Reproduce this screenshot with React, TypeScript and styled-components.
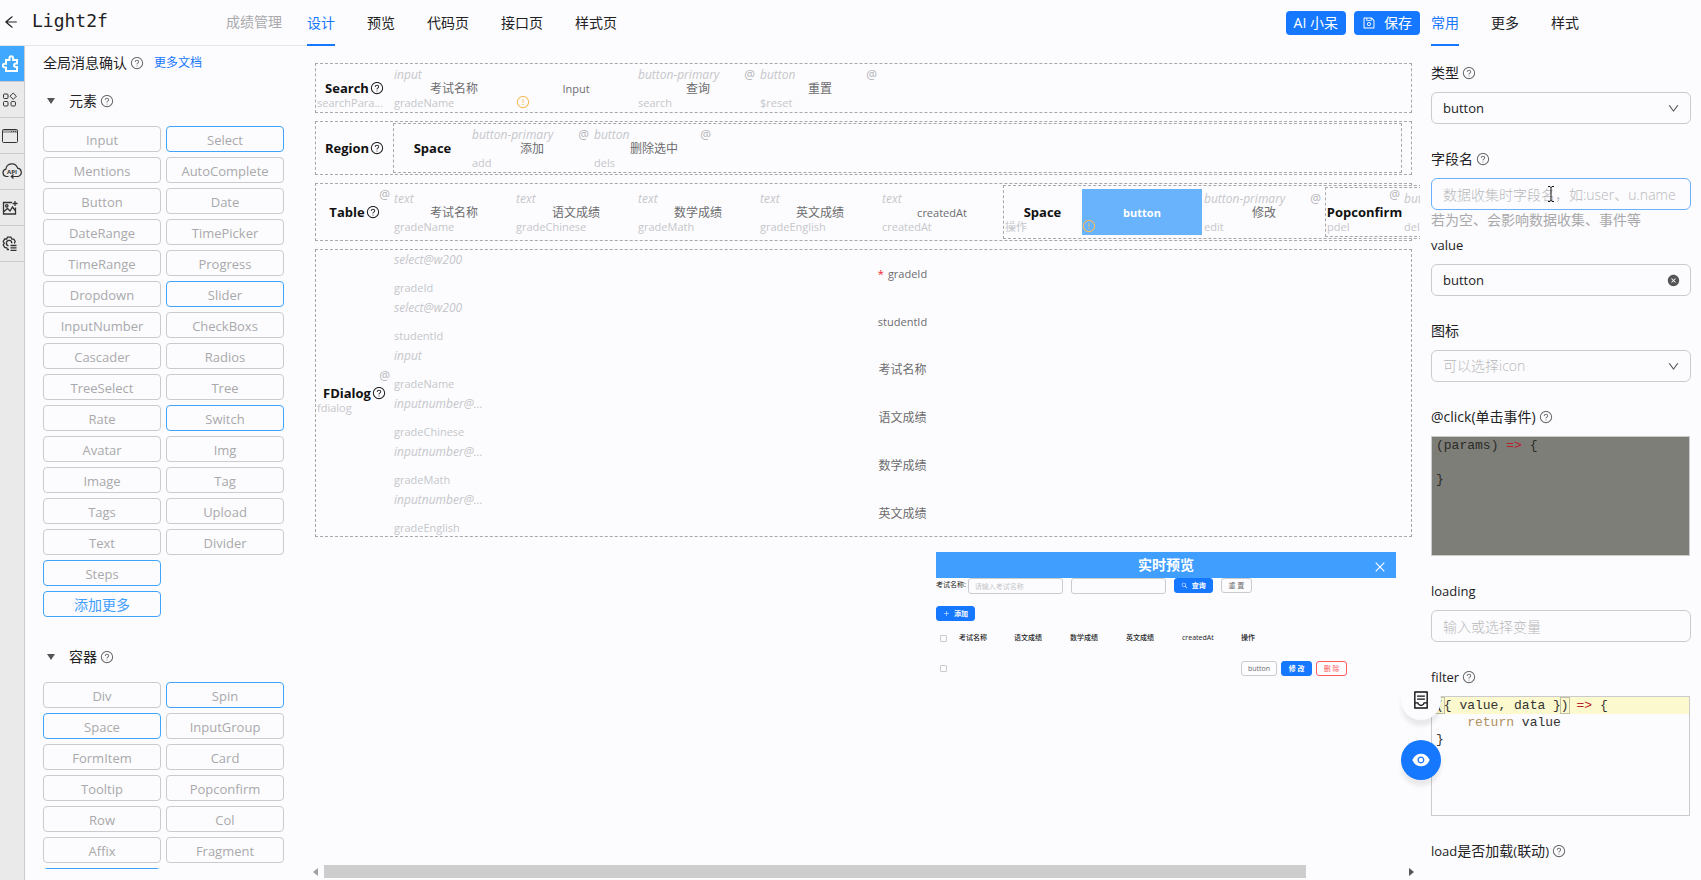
import React from 'react';
import styled, { createGlobalStyle, css } from 'styled-components';
import {
  AiOutlineArrowLeft,
  AiOutlineQuestionCircle,
  AiOutlineExclamationCircle,
  AiOutlineSave,
  AiOutlineDown,
  AiFillCloseCircle,
  AiOutlineContainer,
  AiFillEye,
  AiOutlineSearch,
  AiOutlinePlus,
  AiOutlineClose,
} from 'react-icons/ai';

const c = {
  page: '#fcfcfe',
  blue: '#1677ff',
  sky: '#409eff',
  line: '#cbcbcd',
  dash: '#a8a8aa',
  text: '#222224',
  mid: '#6c6c6e',
  pale: '#a9a9ab',
  faint: '#c6c6ca',
};

const sans = '"Open Sans", "Noto Sans CJK SC", sans-serif';
const mono = '"Liberation Mono", "Noto Sans CJK SC", monospace';

const GlobalStyle = createGlobalStyle`
  *, *::before, *::after { box-sizing: border-box; }
  body { margin: 0; background: ${c.page}; color: ${c.text}; font: 14px/22px ${sans}; }
  button, input, select { font: inherit; color: inherit; margin: 0; }
  button { cursor: pointer; }
  svg { display: block; flex: none; }
`;

/* ---------- shell ---------- */

const Shell = styled.div`
  display: flex;
  height: 100vh;
  overflow: hidden;
`;

const Left = styled.div`
  display: flex;
  flex-direction: column;
  flex: none;
  width: 307px;
`;

const Brand = styled.header`
  display: flex;
  align-items: center;
  flex: none;
  height: 46px;
  padding: 0 25px 1px 3px;
  border-bottom: 1px solid #e6e6e8;
`;

const BackButton = styled.button`
  display: flex;
  padding: 0;
  border: 0;
  background: none;
  font-size: 16px;
`;

const Logo = styled.h1`
  margin: 0 auto 2px 13px;
  font: 18px/24px "DejaVu Sans Mono", monospace;
`;

const PageName = styled.span`
  color: ${c.pale};
`;

const LeftBody = styled.div`
  display: flex;
  flex: 1;
  min-height: 0;
`;

const Rail = styled.nav`
  flex: none;
  width: 25px;
  border-right: 1px solid ${c.line};
  background: #eaeaea;
`;

const RailButton = styled.button<{ $active?: boolean }>`
  display: flex;
  align-items: center;
  width: 100%;
  height: 36px;
  padding: 0 0 0 2px;
  border: 0;
  border-bottom: 1px solid ${c.line};
  background: ${p => (p.$active ? '#40a9ff' : 'transparent')};
  color: ${p => (p.$active ? '#fff' : '#333')};
`;

const Palette = styled.div`
  flex: 1;
  margin-bottom: 11px;
  padding: 0 23px 0 18px;
  overflow: hidden;
`;

const PaletteTop = styled.div`
  display: flex;
  align-items: center;
  height: 34px;
`;

const DocsLink = styled.a`
  margin-left: 10px;
  color: ${c.blue};
  font-size: 12px;
  text-decoration: none;
`;

const HelpIcon = styled(AiOutlineQuestionCircle)<{ $dark?: boolean }>`
  width: 14px;
  height: 14px;
  margin-left: ${p => (p.$dark ? 1 : 3)}px;
  color: ${p => (p.$dark ? '#222' : '#6c6c70')};
`;

const GroupHead = styled.h2`
  display: flex;
  align-items: center;
  height: 42px;
  margin: 0 0 4px;
  padding-left: 4px;
  font-size: 14px;
  font-weight: 400;

  &::before {
    content: '';
    margin-right: 14px;
    border: 4px solid transparent;
    border-top: 6px solid #555;
    border-bottom: 0;
  }
`;

const Group = styled.section`
  margin-bottom: 19px;
`;

const Grid = styled.div`
  display: grid;
  grid-template-columns: 1fr 1fr;
  gap: 5px;
`;

const PaletteButton = styled.button<{ $hot?: boolean; $more?: boolean }>`
  grid-column: ${p => (p.$more ? 1 : 'auto')};
  height: 26px;
  padding: 1px 0 0;
  border: 1px solid ${p => (p.$hot || p.$more ? '#40a4fb' : c.line)};
  border-radius: 4px;
  background: transparent;
  color: ${p => (p.$more ? c.sky : c.pale)};
  font-size: ${p => (p.$more ? 14 : 13)}px;
  line-height: 22px;
`;

/* ---------- centre ---------- */

const Center = styled.main`
  position: relative;
  display: flex;
  flex-direction: column;
  flex: 1;
  min-width: 0;
`;

const Bar = styled.div`
  display: flex;
  align-items: center;
  flex: none;
  height: 46px;
`;

const Tabs = styled.div`
  display: flex;
  gap: 32px;
  height: 46px;
  margin-right: auto;
`;

const Tab = styled.button<{ $active?: boolean }>`
  padding: 0 0 1px;
  border: 0;
  background: none;
  color: ${c.text};
  ${p =>
    p.$active &&
    css`
      color: ${c.blue};
      box-shadow: inset 0 -2px ${c.blue};
    `}
`;

const TopButton = styled.button`
  display: flex;
  align-items: center;
  gap: 8px;
  height: 24px;
  margin-left: 8px;
  padding: 0 8px;
  border: 0;
  border-radius: 4px;
  background: ${c.blue};
  color: #fff;
`;

const Canvas = styled.div`
  display: flex;
  flex-direction: column;
  flex: 1;
  gap: 8px;
  min-height: 0;
  padding: 17px 8px 0;
  overflow: hidden;
`;

const ScrollBar = styled.div`
  display: flex;
  align-items: center;
  justify-content: space-between;
  flex: none;
  height: 13px;
  margin: 0 6px 2px;
`;

const Arrow = styled.span<{ $right?: boolean }>`
  border: 4px solid transparent;
  ${p =>
    p.$right
      ? css`
          border-left: 5px solid #555;
          border-right: 0;
        `
      : css`
          border-right: 5px solid #a0a0a0;
          border-left: 0;
        `}
`;

const Track = styled.div`
  flex: 1;
  height: 100%;
  margin: 0 6px;
`;

const Thumb = styled.div`
  width: 91%;
  height: 100%;
  background: #cdcdcd;
`;

const Frame = styled.div<{ $nested?: boolean; $fill?: boolean }>`
  display: flex;
  align-items: center;
  flex: ${p => (p.$fill ? '1' : 'none')};
  margin: ${p => (p.$nested ? '1px 0' : 0)};
  margin-right: ${p => (p.$fill ? 9 : 0)}px;
  border: 1px dashed ${c.dash};
  background: ${c.page};
`;

const Handle = styled.div`
  position: relative;
  display: flex;
  align-items: center;
  justify-content: center;
  flex: none;
  width: 77px;
  height: 48px;
  font-size: 13px;
  font-weight: 700;
  color: #111;
`;

const HandleField = styled.span`
  position: absolute;
  left: 1px;
  bottom: 1px;
  color: ${c.faint};
  font-size: 11px;
  font-weight: 400;
  line-height: 16px;
`;

const HandleEvent = styled.span`
  position: absolute;
  top: 0;
  right: 3px;
  color: #b4b4b8;
  font-size: 12px;
  font-weight: 400;
  line-height: 14px;
`;

const Node = styled.div<{ $selected?: boolean; $wide?: boolean }>`
  display: grid;
  grid-template-columns: 1fr auto;
  grid-template-rows: 20px 8px 16px;
  flex: none;
  width: ${p => (p.$wide ? '100%' : '120px')};
  height: 46px;
  margin: ${p => (p.$wide ? '0' : '1px')};
  background: ${p => (p.$selected ? '#69b3fc' : 'transparent')};
  color: ${p => (p.$selected ? '#fff' : c.mid)};
  font-weight: ${p => (p.$selected ? 700 : 400)};
  line-height: 20px;
`;

const NodeType = styled.span`
  grid-area: 1 / 1;
  color: ${c.faint};
  font-size: 12px;
  font-style: italic;
`;

const NodeEvent = styled.span`
  grid-area: 1 / 2;
  margin-right: 3px;
  color: #b4b4b8;
  font-size: 12px;
`;

const NodeName = styled.span<{ $latin?: boolean }>`
  grid-area: 2 / 1 / 3 / 3;
  align-self: center;
  justify-self: center;
  font-size: ${p => (p.$latin ? 11 : 12)}px;
`;

const NodeField = styled.span`
  grid-area: 3 / 1;
  color: ${c.faint};
  font-size: 11px;
`;

const Warn = styled(AiOutlineExclamationCircle)`
  grid-area: 3 / 1;
  align-self: center;
  width: 14px;
  height: 14px;
  margin-top: 2px;
  color: #f8bb5c;
`;

const Star = styled.span`
  margin-right: 4px;
  color: #f5222d;
`;

const Stack = styled.div`
  display: flex;
  flex-direction: column;
  flex: 1;
  gap: 2px;
  margin-left: 1px;
`;

/* ---------- live preview ---------- */

const Preview = styled.section`
  position: absolute;
  top: 552px;
  right: 24px;
  width: 460px;
  background: ${c.page};
  font-size: 7px;
  line-height: 14px;
`;

const PreviewHead = styled.div`
  display: flex;
  align-items: center;
  height: 26px;
  padding: 0 9px 0 23px;
  background: ${c.sky};
  color: #fff;
`;

const PreviewTitle = styled.h3`
  flex: 1;
  margin: 0;
  font-size: 14px;
  text-align: center;
`;

const CloseButton = styled.button`
  display: flex;
  padding: 3px 0 0;
  border: 0;
  background: none;
  font-size: 14px;
`;

const PreviewForm = styled.form`
  display: flex;
  gap: 8px;
  height: 16px;
  margin-bottom: 12px;
`;

const PreviewLabel = styled.label`
  display: flex;
  gap: 2px;
`;

const PreviewInput = styled.input`
  width: 95px;
  height: 16px;
  padding: 0 6px;
  border: 1px solid ${c.line};
  border-radius: 3px;
  background: transparent;

  &::placeholder { color: ${c.faint}; }
`;

const MiniButton = styled.button<{ $kind?: 'primary' | 'danger' }>`
  display: flex;
  align-items: center;
  justify-content: center;
  gap: 4px;
  height: 15px;
  min-width: 31px;
  padding: 0 6px;
  border: 1px solid
    ${p => (p.$kind === 'primary' ? c.blue : p.$kind === 'danger' ? '#ff5a5c' : c.line)};
  border-radius: 3px;
  background: ${p => (p.$kind === 'primary' ? c.blue : 'transparent')};
  color: ${p => (p.$kind === 'primary' ? '#fff' : p.$kind === 'danger' ? '#ff5a5c' : c.mid)};
  font-size: 7px;
  font-weight: ${p => (p.$kind === 'primary' ? 700 : 400)};
  line-height: 13px;
`;

const MiniActions = styled.div`
  display: flex;
  gap: 4px;
`;

const PreviewTable = styled.table`
  width: 100%;
  margin-top: 2px;
  border-collapse: collapse;
  table-layout: fixed;
  text-align: left;

  th, td { height: 30px; padding: 0; font-weight: 500; white-space: nowrap; }
  th:first-child { width: 23px; }
  th:nth-child(2) { width: 55px; }
  th:nth-child(n + 3) { width: 56px; }
  th:nth-child(6) { width: 59px; }
  th:last-child { width: auto; }
`;

const Check = styled.input`
  appearance: none;
  display: block;
  width: 7px;
  height: 7px;
  margin: 0 4px;
  border: 1px solid ${c.line};
  border-radius: 1px;
`;

/* ---------- floating buttons ---------- */

const Floats = styled.div`
  position: absolute;
  top: 680px;
  right: -21px;
  z-index: 2;
  display: flex;
  flex-direction: column;
  gap: 20px;
`;

const FloatButton = styled.button<{ $primary?: boolean }>`
  display: flex;
  align-items: center;
  justify-content: center;
  width: 40px;
  height: 40px;
  border: 0;
  border-radius: 50%;
  background: ${p => (p.$primary ? c.blue : c.page)};
  color: ${p => (p.$primary ? '#fff' : '#111')};
  font-size: 20px;
  box-shadow: 0 6px 4px rgba(0, 0, 0, 0.08);
`;

/* ---------- properties ---------- */

const Props = styled.aside`
  flex: none;
  width: 281px;
  padding: 0 10px 0 11px;
  overflow: hidden;
`;

const FieldList = styled.div`
  display: flex;
  flex-direction: column;
  gap: 24px;
  padding-top: 16px;
`;

const Field = styled.div`
  position: relative;
`;

const FieldLabel = styled.label`
  display: flex;
  align-items: center;
  height: 22px;
  margin-bottom: 8px;
`;

const Latin = styled.span`
  font-size: 13px;
`;

const controlStyle = css`
  display: block;
  width: 100%;
  height: 32px;
  padding: 0 11px;
  border: 1px solid ${c.line};
  border-radius: 6px;
  outline: 0;
  background: transparent;
  font-size: 13px;
`;

const TextBox = styled.input<{ $focus?: boolean; $cjk?: boolean }>`
  ${controlStyle}
  border-color: ${p => (p.$focus ? '#69b1ff' : c.line)};
  ${p => p.$cjk && 'font-size: 14px;'}

  &::placeholder { color: #b8b8bb; opacity: 1; font-weight: 300; }
`;

const Select = styled.select<{ $empty?: boolean }>`
  ${controlStyle}
  appearance: none;
  color: ${p => (p.$empty ? '#b8b8bb' : c.text)};
  font-size: ${p => (p.$empty ? 14 : 13)}px;
  font-weight: ${p => (p.$empty ? 300 : 400)};
`;

const Suffix = styled.span`
  position: absolute;
  right: 11px;
  bottom: 9px;
  color: #555;
  font-size: 13px;
  pointer-events: none;
`;

const Hint = styled.p`
  margin: 0 0 -22px;
  color: ${c.pale};
  line-height: 20px;
  padding-bottom: 2px;
`;

const TextCursor = styled.svg`
  position: absolute;
  left: 116px;
  bottom: 8px;
`;

const Editor = styled.pre<{ $dark?: boolean }>`
  height: 120px;
  margin: 0 1px 0 0;
  border: 1px solid ${c.line};
  background: ${p => (p.$dark ? '#7e7e79' : 'transparent')};
  color: ${p => (p.$dark ? '#2b2b26' : '#333')};
  font: 13px/17px ${mono};
`;

const CodeLine = styled.code<{ $active?: boolean }>`
  display: block;
  height: 17px;
  padding-left: 4px;
  background: ${p => (p.$active ? '#fdf9ce' : 'transparent')};
  font-family: inherit;
`;

const Token = styled.span<{ $kind: 'arrow' | 'key' | 'bracket' }>`
  ${p => p.$kind === 'arrow' && 'color: #b8202a;'}
  ${p => p.$kind === 'key' && 'color: #b09060;'}
  ${p => p.$kind === 'bracket' && 'box-shadow: 0 0 0 1px rgba(120, 120, 110, 0.45);'}
`;

/* ---------- data ---------- */

const elements = [
  'Input', 'Select', 'Mentions', 'AutoComplete', 'Button', 'Date', 'DateRange', 'TimePicker',
  'TimeRange', 'Progress', 'Dropdown', 'Slider', 'InputNumber', 'CheckBoxs', 'Cascader', 'Radios',
  'TreeSelect', 'Tree', 'Rate', 'Switch', 'Avatar', 'Img', 'Image', 'Tag', 'Tags', 'Upload',
  'Text', 'Divider', 'Steps',
];
const containers = [
  'Div', 'Spin', 'Space', 'InputGroup', 'FormItem', 'Card', 'Tooltip', 'Popconfirm', 'Row', 'Col',
  'Affix', 'Fragment',
];
const hot = new Set(['Select', 'Slider', 'Switch', 'Steps', 'Spin', 'Space']);

type NodeData = {
  type?: string;
  name?: string;
  field?: string;
  event?: boolean;
  warn?: boolean;
  selected?: boolean;
  wide?: boolean;
  required?: boolean;
};

const searchNodes: NodeData[] = [
  { type: 'input', name: '考试名称', field: 'gradeName' },
  { name: 'Input', warn: true },
  { type: 'button-primary', name: '查询', field: 'search', event: true },
  { type: 'button', name: '重置', field: '$reset', event: true },
];
const regionNodes: NodeData[] = [
  { type: 'button-primary', name: '添加', field: 'add', event: true },
  { type: 'button', name: '删除选中', field: 'dels', event: true },
];
const tableNodes: NodeData[] = [
  { type: 'text', name: '考试名称', field: 'gradeName' },
  { type: 'text', name: '语文成绩', field: 'gradeChinese' },
  { type: 'text', name: '数学成绩', field: 'gradeMath' },
  { type: 'text', name: '英文成绩', field: 'gradeEnglish' },
  { type: 'text', name: 'createdAt', field: 'createdAt' },
];
const dialogNodes: NodeData[] = [
  { type: 'select@w200', name: 'gradeId', field: 'gradeId', required: true },
  { type: 'select@w200', name: 'studentId', field: 'studentId' },
  { type: 'input', name: '考试名称', field: 'gradeName' },
  { type: 'inputnumber@...', name: '语文成绩', field: 'gradeChinese' },
  { type: 'inputnumber@...', name: '数学成绩', field: 'gradeMath' },
  { type: 'inputnumber@...', name: '英文成绩', field: 'gradeEnglish' },
];

/* ---------- pieces ---------- */

function CanvasNode({ type, name, field, event, warn, selected, wide, required }: NodeData) {
  return (
    <Node $selected={selected} $wide={wide}>
      {type && <NodeType>{type}</NodeType>}
      {event && <NodeEvent>@</NodeEvent>}
      {name && (
        <NodeName $latin={/^[a-z]/i.test(name)}>
          {required && <Star>*</Star>}
          {name}
        </NodeName>
      )}
      {field && <NodeField>{field}</NodeField>}
      {warn && <Warn />}
    </Node>
  );
}

function FrameHandle(p: { title: string; field?: string; help?: boolean; event?: boolean }) {
  return (
    <Handle>
      {p.title}
      {p.help && <HelpIcon $dark />}
      {p.event && <HandleEvent>@</HandleEvent>}
      {p.field && <HandleField>{p.field}</HandleField>}
    </Handle>
  );
}

const railIcons: [string, React.ReactNode][] = [
  ['组件', (
    <svg key="p" width="18" height="18" viewBox="0 0 18 18" fill="none" stroke="currentColor" strokeWidth="2">
      <path d="M4 5h3.500V3a1.800 1.800 0 0 1 3.600 0v2H15v3.500h-1.200a1.700 1.700 0 0 0 0 3.400H15V16H4v-3.600H2.600a1.800 1.800 0 0 1 0-3.600H4z" />
    </svg>
  )],
  ['模块', (
    <svg key="a" width="16" height="16" viewBox="0 0 16 16" fill="none" stroke="currentColor">
      <rect x="1.5" y="2" width="4.5" height="4.5" rx="1" />
      <path d="M11.2 1 14.4 4.2 11.2 7.4 8 4.2z" />
      <rect x="1.5" y="9.5" width="4.5" height="4.5" rx="1" />
      <rect x="9" y="9.5" width="4.5" height="4.5" rx="1.2" />
    </svg>
  )],
  ['窗口', (
    <svg key="w" width="17" height="16" viewBox="0 0 17 16" fill="none" stroke="currentColor">
      <path d="M1 3.500h15" stroke="#aaa" strokeWidth="3" />
      <rect x="0.5" y="1.5" width="15" height="13" rx="1" />
      <path d="M9 3.500h1M11 3.500h1M13 3.500h1" stroke="#444" />
    </svg>
  )],
  ['接口', (
    <svg key="c" width="20" height="17" viewBox="0 0 20 17" fill="none" stroke="currentColor" strokeWidth="1.2">
      <path d="M6.500 13.500H4.500a3.700 3.700 0 0 1-.6-7.300A6 6 0 0 1 15.600 5.200a4.200 4.200 0 0 1 1 8.100l-1.400.2H9.500M11.500 11.500l-2.200 2 2.200 2" />
      <text x="5" y="11" fontSize="6" fontWeight="700" fill="currentColor" stroke="none">API</text>
    </svg>
  )],
  ['图片', (
    <svg key="i" width="16" height="16" viewBox="0 0 16 16" fill="none" stroke="currentColor" strokeWidth="1.3">
      <path d="M10 2.500H1.500v11.500h12V7.500M13 1v5M10.500 3.500h5M2 11.500l3.500-3 2.500 2.500 2.500-4 3 4" />
      <circle cx="4.8" cy="5.8" r="1.2" />
    </svg>
  )],
  ['设置', (
    <svg key="s" width="16" height="16" viewBox="0 0 16 16" fill="none" stroke="currentColor" strokeWidth="1.3">
      <path d="M7 13.500H5.500L4.700 11.800 2.700 11.500 1.200 8.800 2.300 7.300 1.200 5.500 2.700 3 4.700 3 5.500 1.200h3.400L9.800 3l2 .1L13.200 5.500 12.300 7.500" />
      <path d="M6.500 9.800A2.700 2.700 0 1 1 9.800 7.200M8.500 9.500h6M8.500 11.900h6M8.500 14.300h6" />
    </svg>
  )],
];

/* ---------- page ---------- */

export default function App() {
  return (
    <Shell>
      <GlobalStyle />
      <Left>
        <Brand>
          <BackButton aria-label="返回"><AiOutlineArrowLeft /></BackButton>
          <Logo>Light2f</Logo>
          <PageName>成绩管理</PageName>
        </Brand>
        <LeftBody>
          <Rail>
            {railIcons.map(([label, icon], i) => (
              <RailButton key={label} aria-label={label} $active={i === 0}>{icon}</RailButton>
            ))}
          </Rail>
          <Palette>
            <PaletteTop>
              全局消息确认
              <HelpIcon />
              <DocsLink href="#docs">更多文档</DocsLink>
            </PaletteTop>
            <Group>
              <GroupHead>元素<HelpIcon /></GroupHead>
              <Grid>
                {elements.map(name => (
                  <PaletteButton key={name} $hot={hot.has(name)}>{name}</PaletteButton>
                ))}
                <PaletteButton $more>添加更多</PaletteButton>
              </Grid>
            </Group>
            <Group>
              <GroupHead>容器<HelpIcon /></GroupHead>
              <Grid>
                {containers.map(name => (
                  <PaletteButton key={name} $hot={hot.has(name)}>{name}</PaletteButton>
                ))}
                <PaletteButton $more />
              </Grid>
            </Group>
          </Palette>
        </LeftBody>
      </Left>

      <Center>
        <Bar>
          <Tabs>
            <Tab $active>设计</Tab>
            <Tab>预览</Tab>
            <Tab>代码页</Tab>
            <Tab>接口页</Tab>
            <Tab>样式页</Tab>
          </Tabs>
          <TopButton>AI 小呆</TopButton>
          <TopButton><AiOutlineSave />保存</TopButton>
        </Bar>

        <Canvas>
          <Frame>
            <FrameHandle title="Search" field="searchPara..." help />
            {searchNodes.map((n, i) => <CanvasNode key={i} {...n} />)}
          </Frame>
          <Frame>
            <FrameHandle title="Region" help />
            <Frame $nested $fill>
              <FrameHandle title="Space" />
              {regionNodes.map((n, i) => <CanvasNode key={i} {...n} />)}
            </Frame>
          </Frame>
          <Frame>
            <FrameHandle title="Table" help event />
            {tableNodes.map((n, i) => <CanvasNode key={i} {...n} />)}
            <Frame $nested>
              <FrameHandle title="Space" field="操作" />
              <CanvasNode name="button" warn selected />
              <CanvasNode type="button-primary" name="修改" field="edit" event />
              <Frame $nested>
                <FrameHandle title="Popconfirm" field="pdel" event />
                <CanvasNode type="button" field="del" />
              </Frame>
            </Frame>
          </Frame>
          <Frame>
            <FrameHandle title="FDialog" field="fdialog" help event />
            <Stack>
              {dialogNodes.map((n, i) => <CanvasNode key={i} wide {...n} />)}
            </Stack>
          </Frame>
        </Canvas>

        <ScrollBar>
          <Arrow />
          <Track><Thumb /></Track>
          <Arrow $right />
        </ScrollBar>

        <Preview>
          <PreviewHead>
            <PreviewTitle>实时预览</PreviewTitle>
            <CloseButton aria-label="关闭"><AiOutlineClose /></CloseButton>
          </PreviewHead>
          <PreviewForm>
            <PreviewLabel>
              考试名称:
              <PreviewInput placeholder="请输入考试名称" />
            </PreviewLabel>
            <PreviewInput aria-label="Input" />
            <MiniButton type="button" $kind="primary"><AiOutlineSearch />查询</MiniButton>
            <MiniButton type="button">重 置</MiniButton>
          </PreviewForm>
          <MiniButton $kind="primary"><AiOutlinePlus />添加</MiniButton>
          <PreviewTable>
            <thead>
              <tr>
                <th><Check type="checkbox" aria-label="全选" /></th>
                <th>考试名称</th>
                <th>语文成绩</th>
                <th>数学成绩</th>
                <th>英文成绩</th>
                <th>createdAt</th>
                <th>操作</th>
              </tr>
            </thead>
            <tbody>
              <tr>
                <td><Check type="checkbox" aria-label="选择" /></td>
                <td /><td /><td /><td /><td />
                <td>
                  <MiniActions>
                    <MiniButton>button</MiniButton>
                    <MiniButton $kind="primary">修 改</MiniButton>
                    <MiniButton $kind="danger">删 除</MiniButton>
                  </MiniActions>
                </td>
              </tr>
            </tbody>
          </PreviewTable>
        </Preview>

        <Floats>
          <FloatButton aria-label="日志"><AiOutlineContainer /></FloatButton>
          <FloatButton aria-label="预览" $primary><AiFillEye /></FloatButton>
        </Floats>
      </Center>

      <Props>
        <Tabs>
          <Tab $active>常用</Tab>
          <Tab>更多</Tab>
          <Tab>样式</Tab>
        </Tabs>
        <FieldList>
          <Field>
            <FieldLabel htmlFor="type">类型<HelpIcon /></FieldLabel>
            <Select id="type"><option>button</option></Select>
            <Suffix><AiOutlineDown /></Suffix>
          </Field>
          <Field>
            <FieldLabel htmlFor="field">字段名<HelpIcon /></FieldLabel>
            <TextBox id="field" $focus $cjk placeholder="数据收集时字段名，如:user、u.name" />
            <Hint>若为空、会影响数据收集、事件等</Hint>
            <TextCursor width="8" height="16" viewBox="0 0 8 16" fill="none" stroke="#111">
              <path d="M1 .5h2l1 1 1-1h2M4 1v14M1 15.500h2l1-1 1 1h2" />
            </TextCursor>
          </Field>
          <Field>
            <FieldLabel htmlFor="value"><Latin>value</Latin></FieldLabel>
            <TextBox id="value" defaultValue="button" />
            <Suffix><AiFillCloseCircle /></Suffix>
          </Field>
          <Field>
            <FieldLabel htmlFor="icon">图标</FieldLabel>
            <Select id="icon" $empty><option>可以选择icon</option></Select>
            <Suffix><AiOutlineDown /></Suffix>
          </Field>
          <Field>
            <FieldLabel as="div">
              @click(单击事件)
              <HelpIcon />
            </FieldLabel>
            <Editor $dark>
              <CodeLine>
                <Token $kind="bracket">(</Token>params<Token $kind="bracket">)</Token>{' '}
                <Token $kind="arrow">{'=>'}</Token>{' {'}
              </CodeLine>
              <CodeLine />
              <CodeLine>{'}'}</CodeLine>
            </Editor>
          </Field>
          <Field>
            <FieldLabel htmlFor="loading"><Latin>loading</Latin></FieldLabel>
            <TextBox id="loading" $cjk placeholder="输入或选择变量" />
          </Field>
          <Field>
            <FieldLabel as="div"><Latin>filter</Latin><HelpIcon /></FieldLabel>
            <Editor>
              <CodeLine $active>
                <Token $kind="bracket">(</Token>{'{ value, data }'}
                <Token $kind="bracket">)</Token>{' '}
                <Token $kind="arrow">{'=>'}</Token>{' {'}
              </CodeLine>
              <CodeLine>{'    '}<Token $kind="key">return</Token>{' value'}</CodeLine>
              <CodeLine>{'}'}</CodeLine>
            </Editor>
          </Field>
          <Field>
            <FieldLabel as="div">
              <Latin>load</Latin>是否加载<Latin>(</Latin>联动<Latin>)</Latin>
              <HelpIcon />
            </FieldLabel>
          </Field>
        </FieldList>
      </Props>
    </Shell>
  );
}
